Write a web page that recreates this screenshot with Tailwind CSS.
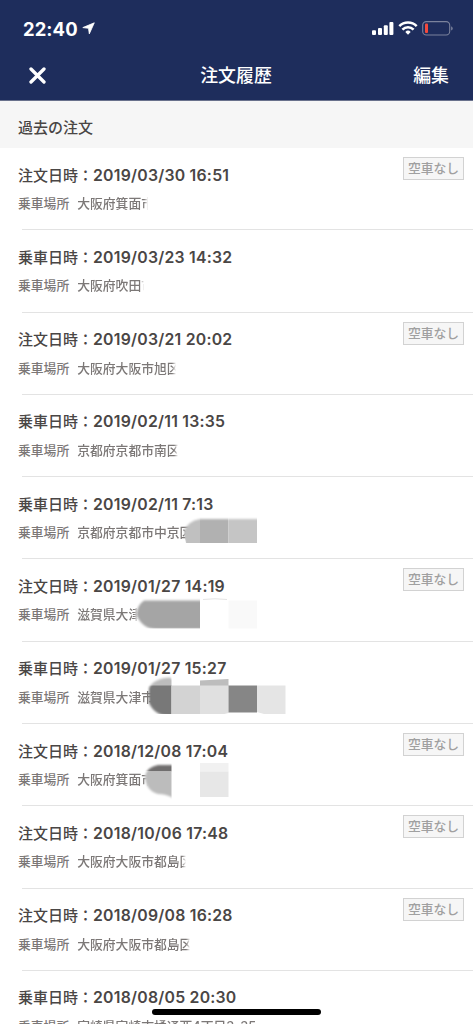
<!DOCTYPE html>
<html lang="ja">
<head>
<meta charset="utf-8">
<title>注文履歴</title>
<script src="https://cdn.jsdelivr.net/npm/@tailwindcss/browser@4"></script>
</head>
<body class="bg-white">
<div class="relative flex h-[1024px] w-[473px] flex-col overflow-hidden bg-white font-['Inter','Noto_Sans_CJK_JP',sans-serif]">
  <header class="flex h-[101px] shrink-0 flex-col border-b border-[#69718c] bg-[#1e2d5c] text-white">
    <div class="flex h-[50px] items-center pt-[7px] pr-[19px] pl-[23px]">
      <span class="w-[59px] text-[18.4px] leading-5 font-bold tracking-[0.1px] whitespace-nowrap">22:40</span>
      <svg class="size-[13px]" viewBox="0 0 13 13"><path d="M12.300.8.8 5.600l5.700.7.800 5.600z" fill="#fff" stroke="#fff" stroke-width=".8" stroke-linejoin="round"/></svg>
      <svg class="ml-auto h-4 w-[82px]" viewBox="0 0 82 16">
        <g fill="#fff"><rect x="0" y="9.300" width="4" height="4.700" rx="1"/><rect x="6" y="7" width="4" height="7" rx="1"/><rect x="11.800" y="4.200" width="4" height="9.800" rx="1"/><rect x="17.400" y="1" width="4" height="13" rx="1"/></g>
        <g fill="none" stroke="#fff" stroke-width="2.500"><path d="M27.300 5.200a12.200 12.200 0 0 1 17.400 0"/><path d="M30.400 8.600a7.900 7.900 0 0 1 11.200 0"/></g>
        <path d="M36 13.700l-2.700-2.800a3.900 3.900 0 0 1 5.400 0z" fill="#fff"/>
        <rect x="50.700" y=".6" width="27" height="13.400" rx="3.600" fill="none" stroke="#7b829c" stroke-width="1.100"/>
        <rect x="53" y="2.600" width="3" height="9.400" rx="1" fill="#f4493c"/>
        <path d="M79.200 5.200c2 .9 2 3.500 0 4.300z" fill="#8288a1"/>
      </svg>
    </div>
    <div class="grid h-[50px] grid-cols-[1fr_auto_1fr] items-center pr-[24px] pl-[29px] text-[17.900px] leading-[26px] font-medium">
      <svg class="size-[17px]" viewBox="0 0 17 17"><path d="M2 2l13 13M15 2 2 15" stroke="#fff" stroke-width="3.300" stroke-linecap="round"/></svg>
      <h1 class="mt-[2px] -translate-x-[3px]">注文履歴</h1>
      <span class="mt-[2px] text-right font-medium">編集</span>
    </div>
  </header>
  <h2 class="flex h-[47px] shrink-0 items-center bg-[#f6f6f6] pt-[7px] pl-[18px] text-[15px] leading-5 font-medium text-[#4a4645]">過去の注文</h2>
  <main class="flex flex-col" id="orders"></main>

  <svg class="absolute top-[500px] left-[120px] h-[310px] w-[180px]" viewBox="120 500 180 310">
    <defs>
      <filter id="soft" x="-10%" y="-10%" width="120%" height="120%"><feGaussianBlur stdDeviation="1.3"/></filter>
      <mask id="m1" maskUnits="userSpaceOnUse" x="120" y="500" width="180" height="60"><path filter="url(#soft)" d="M280 519H200Q188 521 184 531Q183 541 190 560H280z" fill="#fff"/></mask>
      <mask id="m2" maskUnits="userSpaceOnUse" x="120" y="590" width="180" height="50"><path filter="url(#soft)" d="M280 600.500H144Q136 606 137 616Q143 629 156 629H280z" fill="#fff"/></mask>
      <mask id="m3" maskUnits="userSpaceOnUse" x="120" y="670" width="180" height="50"><path filter="url(#soft)" d="M171 677.500Q154 678 149 688V703Q155 716 170 716H300V679H171z" fill="#fff"/></mask>
      <mask id="m4" maskUnits="userSpaceOnUse" x="120" y="750" width="180" height="60"><path filter="url(#soft)" d="M180 765H158Q147 767 145 776Q146 791 158 794Q166 794 173 798H180z" fill="#fff"/></mask>
    </defs>
    <g mask="url(#m1)"><path d="M180 517h20v26h-14z" fill="#c0c0c0"/><path d="M200 517h28.500v26H200z" fill="#b1b1b1"/><path d="M228.500 517H257v26h-28.500z" fill="#c5c5c5"/></g>
    <g mask="url(#m2)"><path d="M130 597h70v31.500h-70z" fill="#a5a5a5"/></g>
    <path d="M200 600.500h28.500v28H200z" fill="#fff"/><path d="M228.500 600.500H257v28h-28.500z" fill="#f9f9f9"/><path d="M203 599.500q12-1.500 24 0" stroke="#e4e4e4" fill="none"/>
    <g mask="url(#m3)"><path d="M140 674h31.500v12H140z" fill="#bcbcbc"/><path d="M140 685.500h31.500V714H140z" fill="#787878"/></g>
    <path d="M200 680.500l28.500-1.500v7H200z" fill="#bdbdbd"/>
    <path d="M171.500 685.500H200V714h-28.500z" fill="#d3d3d3"/><path d="M200 685.500h28.500V713l-4 1H200z" fill="#e0e0e0"/><path d="M228.500 685.500H257V712.500h-28.500z" fill="#868686"/><path d="M257 685.500h28.500V714H264l-7-2z" fill="#e5e5e5"/>
    <g mask="url(#m4)"><path d="M140 760h31.500v11.500H140z" fill="#706e6e"/><path d="M140 771.500h31.500V800H140z" fill="#bcbcbc"/></g>
    <path d="M200 763h28.500v8.500H200z" fill="#f1f1f1"/><path d="M200 771.500h28.500V797H200z" fill="#e7e7e7"/>
  </svg>
  <div class="absolute top-[1009px] left-[152px] h-[6px] w-[169px] rounded-full bg-black"></div>
</div>

<script>
  // label, date and time, place, visible place width, "no car available" flag
  const orders = [
    ['注文日時', '2019/03/30 16:51', '大阪府箕面市', 71, true],
    ['乗車日時', '2019/03/23 14:32', '大阪府吹田市', 67, false],
    ['注文日時', '2019/03/21 20:02', '大阪府大阪市旭区', 99, true],
    ['乗車日時', '2019/02/11 13:35', '京都府京都市南区', 101, false],
    ['乗車日時', '2019/02/11 7:13', '京都府京都市中京区', 115, false],
    ['注文日時', '2019/01/27 14:19', '滋賀県大津市', 61, true],
    ['乗車日時', '2019/01/27 15:27', '滋賀県大津市', 77, false],
    ['注文日時', '2018/12/08 17:04', '大阪府箕面市', 71, true],
    ['注文日時', '2018/10/06 17:48', '大阪府大阪市都島区', 109, true],
    ['注文日時', '2018/09/08 16:28', '大阪府大阪市都島区', 113, true],
    ['乗車日時', '2018/08/05 20:30', '宮崎県宮崎市橘通西4丁目3-35', 190, false]
  ];
  document.getElementById('orders').innerHTML = orders.map(([label, date, place, width, none]) => `
    <section class="flex h-[82.3px] shrink-0 flex-col pl-[18px]">
      <div class="flex h-[46px] items-start justify-between pr-[9px]">
        <p class="flex pt-[17.5px] text-[15px] leading-5 font-medium whitespace-nowrap text-[#4a4645]">
          <span>${label}：</span><span class="text-[15.8px] font-semibold tracking-[0.24px]">${date}</span>
        </p>
        ${none ? '<span class="mt-[9px] flex h-[23px] w-[61px] items-center justify-center border border-[#d2d2d2] bg-[#f6f6f6] pt-px text-[12.8px] leading-5 font-medium whitespace-nowrap text-[#a0a0a0]">空車なし</span>' : ''}
      </div>
      <p class="flex gap-[8px] text-[12.8px] leading-5 font-medium whitespace-nowrap text-[#7c7877]">
        <span>乗車場所</span>
        <span class="overflow-hidden mask-r-from-[calc(100%-4px)] mask-r-to-100%" style="width:${width}px">${place}</span>
      </p>
      <div class="mt-auto ml-[4px] h-px bg-[#e3e3e3]"></div>
    </section>`).join('');
</script>
</body>
</html>
